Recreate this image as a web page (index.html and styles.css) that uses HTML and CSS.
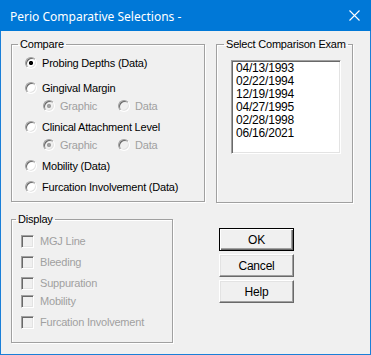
FILE: index.html
```html
<!DOCTYPE html>
<html lang="en">
	<head>
		<meta charset="UTF-8" />
		<title>Perio Comparative Selections</title>
		<link rel="stylesheet" href="styles.css">
	</head>
	<body>
		<div class="window">
			<div class="titlebar">
				<span class="title">Perio Comparative Selections -</span>
				<svg class="close" width="11" height="11" viewBox="0 0 11 11">
					<path d="M0.5 0.5 L10.5 10.5 M10.5 0.5 L0.5 10.5" stroke="#fff" stroke-width="1.1" fill="none" />
				</svg>
			</div>
			<div class="client">
				<div class="top-row">
					<fieldset class="group compare">
						<legend>Compare</legend>
						<label class="opt first"><input type="radio" name="cmp" checked />Probing Depths (Data)</label>
						<label class="opt"><input type="radio" name="cmp" />Gingival Margin</label>
						<div class="sub">
							<label class="subopt"><input type="radio" name="gm" checked disabled />Graphic</label>
							<label class="subopt"><input type="radio" name="gm" disabled />Data</label>
						</div>
						<label class="opt"><input type="radio" name="cmp" />Clinical Attachment Level</label>
						<div class="sub">
							<label class="subopt"><input type="radio" name="cal" checked disabled />Graphic</label>
							<label class="subopt"><input type="radio" name="cal" disabled />Data</label>
						</div>
						<label class="opt"><input type="radio" name="cmp" />Mobility (Data)</label>
						<label class="opt"><input type="radio" name="cmp" />Furcation Involvement (Data)</label>
					</fieldset>
					<fieldset class="group exam">
						<legend>Select Comparison Exam</legend>
						<ul class="listbox">
							<li>04/13/1993</li>
							<li>02/22/1994</li>
							<li>12/19/1994</li>
							<li>04/27/1995</li>
							<li>02/28/1998</li>
							<li>06/16/2021</li>
						</ul>
					</fieldset>
				</div>
				<div class="bottom-row">
					<fieldset class="group display" disabled>
						<legend>Display</legend>
						<label class="chk first"><input type="checkbox" />MGJ Line</label>
						<label class="chk"><input type="checkbox" />Bleeding</label>
						<label class="chk"><input type="checkbox" />Suppuration</label>
						<label class="chk tight"><input type="checkbox" />Mobility</label>
						<label class="chk"><input type="checkbox" />Furcation Involvement</label>
					</fieldset>
					<div class="buttons">
						<button type="button" class="default">OK</button>
						<button type="button">Cancel</button>
						<button type="button">Help</button>
					</div>
				</div>
			</div>
		</div>
	</body>
</html>
```

FILE: styles.css
```css
body {
	margin: 0;
	font: 11px "Liberation Sans", Arial, sans-serif;
	letter-spacing: -0.2px;
	color: #000;
}

.window {
	width: 371px;
	height: 355px;
	box-sizing: border-box;
	background: #f0f0f0;
	border: 1px solid #1a7fd8;
	border-top: 0;
}

.titlebar {
	height: 31px;
	margin: 0 -1px;
	background: #0078d7;
	display: flex;
	align-items: center;
	padding: 0 0 0 10px;
}

.title {
	flex: 1;
	color: #fff;
	font: 12px "Noto Sans", "Open Sans", sans-serif;
	letter-spacing: 0;
	margin-top: 1px;
}

.close {
	margin-right: 11px;
}

/* group boxes, etched like the old dialogs */
.group {
	margin: 0;
	padding: 0;
	min-inline-size: 0;
	border: 1px solid #a0a0a0;
	box-shadow: inset 1px 1px 0 #fff, 1px 1px 0 #fff;
}

.group legend {
	padding: 0 2px;
	line-height: 14px;
	white-space: nowrap;
	color: #000;
}

.top-row {
	display: flex;
	padding: 6px 0 0 10px;
	gap: 11px;
}

.compare {
	width: 194px;
	height: 165px;
	box-sizing: border-box;
	padding: 3px 0 0 13px;
}

.compare legend {
	margin-left: -7px;
}

.exam {
	width: 137px;
	height: 166px;
	box-sizing: border-box;
	padding: 9px 0 0 14px;
}

.exam legend {
	margin-left: -7px;
}

.opt,
.subopt,
.chk {
	display: flex;
	align-items: center;
	height: 18px;
}

.opt {
	margin-top: 3px;
}

.opt.first {
	margin-top: 0;
	margin-bottom: 7px;
}

.sub {
	display: flex;
	padding-left: 18px;
	color: #a0a0a0;
}

.subopt {
	width: 75px;
}

input[type="radio"] {
	appearance: none;
	width: 12px;
	height: 12px;
	margin: 0 5px 0 0;
	box-sizing: border-box;
	border-radius: 50%;
	border: 1px solid;
	border-color: #a0a0a0 #fff #fff #a0a0a0;
	box-shadow: inset 1px 1px 0 #696969, inset -1px -1px 0 #e3e3e3;
	background: #fff;
}

input[type="radio"]:checked {
	background: radial-gradient(circle at 50% 50%, #000 0 1.8px, #fff 2.4px);
}

input[type="radio"]:disabled {
	background: #f0f0f0;
}

input[type="radio"]:disabled:checked {
	background: radial-gradient(circle at 50% 50%, #a0a0a0 0 1.8px, #f0f0f0 2.4px);
}

.listbox {
	list-style: none;
	margin: 0;
	padding: 1px 0 0 4px;
	width: 110px;
	height: 94px;
	box-sizing: border-box;
	background: #fff;
	border: 1px solid;
	border-color: #a0a0a0 #fff #fff #a0a0a0;
	box-shadow: inset 1px 1px 0 #696969, inset -1px -1px 0 #e3e3e3;
	font-size: 12px;
	line-height: 13px;
}

.bottom-row {
	display: flex;
	padding: 9px 0 0 10px;
}

.display {
	width: 162px;
	height: 131px;
	box-sizing: border-box;
	padding: 6px 0 0 9px;
	color: #a0a0a0;
}

.display legend {
	margin-left: -5px;
}

.chk {
	margin-top: 3px;
}

.chk.first,
.chk.tight {
	margin-top: 0;
}

input[type="checkbox"] {
	appearance: none;
	width: 13px;
	height: 13px;
	margin: 0 6px 0 0;
	box-sizing: border-box;
	border: 1px solid;
	border-color: #a0a0a0 #fff #fff #a0a0a0;
	box-shadow: inset 1px 1px 0 #696969, inset -1px -1px 0 #e3e3e3;
	background: #f0f0f0;
}

.buttons {
	display: flex;
	flex-direction: column;
	gap: 3px;
	margin: 16px 0 0 46px;
}

button {
	width: 75px;
	height: 23px;
	padding: 0;
	font: 12px "Liberation Sans", Arial, sans-serif;
	letter-spacing: -0.2px;
	color: #000;
	background: #f0f0f0;
	border: 1px solid;
	border-color: #fff #696969 #696969 #fff;
	box-shadow: inset -1px -1px 0 #a0a0a0, inset 1px 1px 0 #e3e3e3;
}

button.default {
	border: 1px solid #000;
	box-shadow: inset 1px 1px 0 #fff, inset -1px -1px 0 #696969, inset -2px -2px 0 #a0a0a0;
}
```
